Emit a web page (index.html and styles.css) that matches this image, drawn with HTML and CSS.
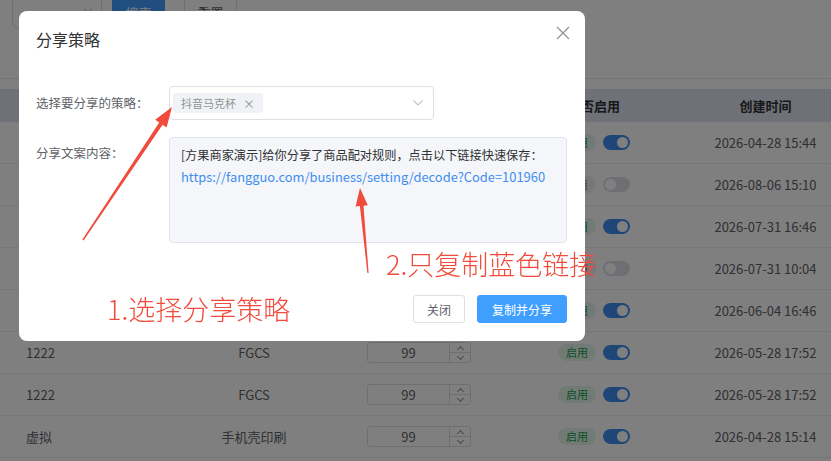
FILE: index.html
```html
<!DOCTYPE html>
<html lang="zh-CN">
<head>
    <meta charset="UTF-8">
    <meta name="viewport" content="width=device-width, initial-scale=1.0">
    <title>分享策略</title>
    <link rel="stylesheet" href="styles.css">
</head>
<body>
    <div class="page">
        <div class="toolbar">
            <div class="filter"><span class="filter-arrow"></span></div>
            <button class="btn-search">搜索</button>
            <button class="btn-reset">重置</button>
        </div>

        <div class="table">
            <div class="thead">
                <div class="cell first">策略名称</div>
                <div class="cell">商品分类</div>
                <div class="cell">排序</div>
                <div class="cell">是否启用</div>
                <div class="cell last">创建时间</div>
            </div>
            <div class="row">
                <div class="cell first">抖音马克杯</div>
                <div class="cell">马克杯</div>
                <div class="cell"><div class="num"><span class="num-val">99</span><span class="num-step"><i class="up"></i><i class="down"></i></span></div></div>
                <div class="cell"><span class="tag on">启用</span><span class="switch on"></span></div>
                <div class="cell last">2026-04-28 15:44</div>
            </div>
            <div class="row">
                <div class="cell first">淘宝抱枕</div>
                <div class="cell">抱枕</div>
                <div class="cell"><div class="num"><span class="num-val">99</span><span class="num-step"><i class="up"></i><i class="down"></i></span></div></div>
                <div class="cell"><span class="tag off">禁用</span><span class="switch"></span></div>
                <div class="cell last">2026-08-06 15:10</div>
            </div>
            <div class="row">
                <div class="cell first">T恤定制</div>
                <div class="cell">服装</div>
                <div class="cell"><div class="num"><span class="num-val">99</span><span class="num-step"><i class="up"></i><i class="down"></i></span></div></div>
                <div class="cell"><span class="tag on">启用</span><span class="switch on"></span></div>
                <div class="cell last">2026-07-31 16:46</div>
            </div>
            <div class="row">
                <div class="cell first">帆布袋</div>
                <div class="cell">箱包</div>
                <div class="cell"><div class="num"><span class="num-val">99</span><span class="num-step"><i class="up"></i><i class="down"></i></span></div></div>
                <div class="cell"><span class="tag off">禁用</span><span class="switch"></span></div>
                <div class="cell last">2026-07-31 10:04</div>
            </div>
            <div class="row">
                <div class="cell first">1222</div>
                <div class="cell">FGCS</div>
                <div class="cell"><div class="num"><span class="num-val">99</span><span class="num-step"><i class="up"></i><i class="down"></i></span></div></div>
                <div class="cell"><span class="tag on">启用</span><span class="switch on"></span></div>
                <div class="cell last">2026-06-04 16:46</div>
            </div>
            <div class="row">
                <div class="cell first">1222</div>
                <div class="cell">FGCS</div>
                <div class="cell"><div class="num"><span class="num-val">99</span><span class="num-step"><i class="up"></i><i class="down"></i></span></div></div>
                <div class="cell"><span class="tag on">启用</span><span class="switch on"></span></div>
                <div class="cell last">2026-05-28 17:52</div>
            </div>
            <div class="row">
                <div class="cell first">1222</div>
                <div class="cell">FGCS</div>
                <div class="cell"><div class="num"><span class="num-val">99</span><span class="num-step"><i class="up"></i><i class="down"></i></span></div></div>
                <div class="cell"><span class="tag on">启用</span><span class="switch on"></span></div>
                <div class="cell last">2026-05-28 17:52</div>
            </div>
            <div class="row">
                <div class="cell first">虚拟</div>
                <div class="cell">手机壳印刷</div>
                <div class="cell"><div class="num"><span class="num-val">99</span><span class="num-step"><i class="up"></i><i class="down"></i></span></div></div>
                <div class="cell"><span class="tag on">启用</span><span class="switch on"></span></div>
                <div class="cell last">2026-04-28 15:14</div>
            </div>
        </div>
    </div>

    <div class="mask">
        <div class="dialog">
            <div class="dialog-title">分享策略</div>
            <span class="dialog-close">
                <svg width="14" height="14" viewBox="0 0 14 14"><path d="M1 1L13 13M13 1L1 13" stroke="#909399" stroke-width="1.3" fill="none"/></svg>
            </span>

            <div class="dialog-body">
                <div class="form-row center">
                    <label class="form-label">选择要分享的策略：</label>
                    <div class="select">
                        <span class="select-tag">抖音马克杯<span class="tag-close">×</span></span>
                        <svg class="select-arrow" width="10" height="6" viewBox="0 0 10 6"><path d="M0.5 0.5L5 5L9.5 0.5" stroke="#c0c4cc" stroke-width="1.1" fill="none"/></svg>
                    </div>
                </div>
                <div class="form-row">
                    <label class="form-label top">分享文案内容：</label>
                    <div class="share-text">
                        <p>[方果商家演示]给你分享了商品配对规则，点击以下链接快速保存：</p>
                        <p class="link">https://fangguo.com/business/setting/decode?Code=101960</p>
                    </div>
                </div>
            </div>

            <div class="dialog-footer">
                <button class="btn">关闭</button>
                <button class="btn primary">复制并分享</button>
            </div>
        </div>
    </div>

    <!-- 标注：箭头和说明文字 -->
    <svg class="marks" width="831" height="461" viewBox="0 0 831 461">
        <polygon fill="#f04b3c" points="82.4,239.6 159.2,122.5 155.2,119.8 172,107 166.6,127.4 162.6,124.7 83.6,240.4"/>
        <polygon fill="#f04b3c" points="367.4,273.1 359.9,206.1 355.6,206.5 360,188 367.8,205.3 363.5,205.7 368.6,273"/>
    </svg>
    <div class="note note-one">1.选择分享策略</div>
    <div class="note note-two">2.只复制蓝色链接</div>
</body>
</html>
```

FILE: styles.css
```css
* {
    margin: 0;
    padding: 0;
    box-sizing: border-box;
}

body {
    font-family: "Noto Sans CJK SC", sans-serif;
    font-size: 13px;
    color: #606266;
    background: #fff;
    width: 831px;
    height: 461px;
    overflow: hidden;
    position: relative;
}

/* 顶部筛选栏 */
.toolbar {
    height: 79px;
    border-bottom: 1px solid #e4e9f1;
    display: flex;
    align-items: flex-start;
}

.filter {
    position: relative;
    width: 90px;
    height: 32px;
    margin: -4px 0 0 12px;
    border: 1px solid #dcdfe6;
    border-radius: 4px;
}

.filter-arrow {
    position: absolute;
    right: 10px;
    top: 9px;
    width: 6px;
    height: 6px;
    border-right: 1px solid #c0c4cc;
    border-bottom: 1px solid #c0c4cc;
    transform: rotate(45deg);
}

.toolbar button {
    width: 53px;
    height: 32px;
    margin-top: -4px;
    border-radius: 3px;
    font-family: inherit;
    font-size: 13px;
}

.btn-search {
    margin-left: 10px;
    background: #409eff;
    color: #fff;
    border: none;
}

.btn-reset {
    margin-left: 19px;
    background: #fff;
    color: #606266;
    border: 1px solid #dcdfe6;
}

/* 策略列表 */
.table {
    margin-top: 10px;
}

.thead,
.row {
    display: grid;
    grid-template-columns: 170px 168px 162px 188px 1fr;
    align-items: center;
}

.thead {
    height: 33px;
    background: #dde3ee;
    color: #303133;
    font-weight: bold;
}

.row {
    height: 42px;
    border-bottom: 1px solid #ebeef5;
}

.cell {
    display: flex;
    align-items: center;
    justify-content: center;
    gap: 7px;
}

.cell.first {
    justify-content: flex-start;
    padding-left: 26px;
}

.cell.last {
    padding-left: 12px;
}

.num {
    width: 104px;
    height: 21px;
    border: 1px solid #dcdfe6;
    border-radius: 3px;
    display: flex;
    background: #fff;
}

.num-val {
    flex: 1;
    text-align: center;
    line-height: 19px;
    color: #606266;
}

.num-step {
    width: 21px;
    border-left: 1px solid #dcdfe6;
    display: flex;
    flex-direction: column;
}

.num-step i {
    flex: 1;
    position: relative;
}

.num-step .up {
    border-bottom: 1px solid #dcdfe6;
}

.num-step i::after {
    content: "";
    position: absolute;
    left: 8px;
    width: 4px;
    height: 4px;
    border-left: 1px solid #909399;
    border-top: 1px solid #909399;
}

.num-step .up::after {
    top: 4px;
    transform: rotate(45deg);
}

.num-step .down::after {
    top: 1px;
    transform: rotate(225deg);
}

.tag {
    width: 38px;
    height: 17px;
    border-radius: 9px;
    font-size: 11px;
    line-height: 17px;
    text-align: center;
}

.tag.on {
    background: #e3f5ea;
    color: #16a34a;
}

.tag.off {
    background: #eef0f3;
    color: #909399;
}

.switch {
    position: relative;
    width: 27px;
    height: 15px;
    border-radius: 8px;
    background: #dcdfe6;
}

.switch::after {
    content: "";
    position: absolute;
    top: 2px;
    left: 2px;
    width: 11px;
    height: 11px;
    border-radius: 50%;
    background: #fff;
}

.switch.on {
    background: #3d8ef0;
}

.switch.on::after {
    left: 14px;
}

/* 弹窗 */
.mask {
    position: fixed;
    inset: 0;
    background: rgba(0, 0, 0, 0.5);
    padding: 11px 0 0 19px;
}

.dialog {
    position: relative;
    width: 566px;
    height: 330px;
    background: #fff;
    border-radius: 8px;
    padding: 16px 18px 18px 17px;
    display: flex;
    flex-direction: column;
}

.dialog-title {
    font-size: 16px;
    line-height: 24px;
    color: #303133;
}

.dialog-close {
    position: absolute;
    top: 15px;
    right: 15px;
    width: 14px;
    height: 14px;
}

.dialog-close svg {
    display: block;
}

.dialog-body {
    margin-top: 35px;
}

.form-row {
    display: flex;
    align-items: flex-start;
}

.form-row.center {
    align-items: center;
}

.form-row + .form-row {
    margin-top: 17px;
}

.form-label {
    width: 133px;
    font-size: 12.5px;
    line-height: 20px;
    color: #606266;
}

.form-label.top {
    padding-top: 6px;
}

.select {
    position: relative;
    width: 265px;
    height: 34px;
    border: 1px solid #dcdfe6;
    border-radius: 4px;
    padding: 0 3px;
    display: flex;
    align-items: center;
}

.select-tag {
    display: inline-flex;
    align-items: center;
    height: 20px;
    padding: 0 8px;
    background: #f0f2f5;
    border-radius: 3px;
    font-size: 11px;
    color: #909399;
}

.tag-close {
    margin-left: 7px;
    font-size: 12px;
}

.select-arrow {
    position: absolute;
    right: 10px;
    top: 13px;
}

.share-text {
    width: 398px;
    height: 106px;
    background: #f4f6fa;
    border: 1px solid #e1e4ea;
    border-radius: 4px;
    padding: 7px 11px;
    font-size: 12.2px;
    line-height: 21px;
    color: #303133;
}

.share-text .link {
    font-size: 12.9px;
    color: #3f8ef0;
}

.dialog-footer {
    margin-top: auto;
    display: flex;
    justify-content: flex-end;
    gap: 12px;
}

.btn {
    height: 28px;
    padding: 0 13px;
    border: 1px solid #dcdfe6;
    border-radius: 3px;
    background: #fff;
    color: #606266;
    font-family: inherit;
    font-size: 12px;
}

.btn.primary {
    padding: 0 14px;
    background: #409eff;
    border-color: #409eff;
    color: #fff;
}

/* 标注 */
.marks {
    position: absolute;
    top: 0;
    left: 0;
    pointer-events: none;
}

.note {
    position: absolute;
    color: #f04b3c;
    font-size: 27px;
    font-weight: 300;
    line-height: 1;
    white-space: nowrap;
}

.note-one {
    left: 107px;
    top: 295px;
}

.note-two {
    left: 386px;
    top: 250px;
}
```
